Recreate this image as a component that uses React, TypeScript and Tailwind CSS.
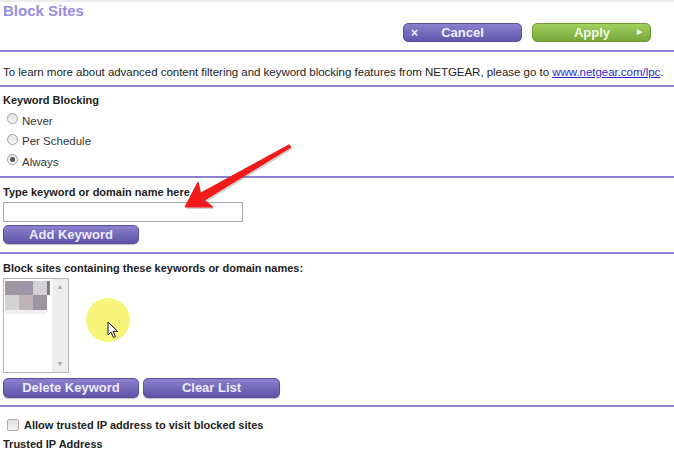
import React from "react"

const purpleBtn =
  "flex items-center justify-center rounded-[5px] border border-[#5a4f9c] bg-gradient-to-b from-[#8c82d0] to-[#5e53a5] text-[13px] font-bold text-[#eeebff] shadow-[0_1px_1px_rgba(0,0,0,0.25)]"

const Rule = () => <div className="h-[2px] w-full bg-[#8b82d2]" />

const Radio = ({ checked }: { checked?: boolean }) => (
  <span className="flex h-[11px] w-[11px] items-center justify-center rounded-full border border-[#a3a3a3] bg-gradient-to-b from-[#e2e2e2] to-[#f8f8f8]">
    {checked && <span className="h-[5px] w-[5px] rounded-full bg-[#555]" />}
  </span>
)

const RadioRow = ({ label, checked }: { label: string; checked?: boolean }) => (
  <div className="flex h-[20.5px] items-center gap-[4px] pl-[7px]">
    <span className="-mt-[3px]">
      <Radio checked={checked} />
    </span>
    <span className="pt-[1px] text-[11.5px] leading-[14px] text-[#333]">{label}</span>
  </div>
)

export default function App() {
  return (
    <div className="relative h-[457px] w-[674px] overflow-hidden bg-white font-['Liberation_Sans',Arial,sans-serif] text-[#222]">
      <div className="h-[50px] border-t-[2px] border-[#ececec]">
        <div className="pl-[3px] text-[15px] font-bold leading-[17px] text-[#978de0]">Block Sites</div>
        <div className="mt-[4px] flex justify-end gap-[10px] pr-[23px]">
          <button className="flex h-[19px] w-[119px] items-center rounded-[5px] border border-[#5a4f9c] bg-gradient-to-b from-[#8b81cf] to-[#6257aa] text-[13px] font-bold text-[#f0eeff]">
            <span className="pl-[7px] text-[12px]">×</span>
            <span className="flex-1 pr-[14px] text-center">Cancel</span>
          </button>
          <button className="flex h-[19px] w-[119px] items-center rounded-[5px] border border-[#6c9c32] bg-gradient-to-b from-[#a2cf60] to-[#76a83a] text-[13px] font-bold text-[#f1f9e6]">
            <span className="flex-1 pl-[14px] text-center">Apply</span>
            <span className="pr-[8px] text-[7px]">▶</span>
          </button>
        </div>
      </div>
      <Rule />
      <div className="h-[33px] pl-[3px] pt-[13px] text-[11.5px] leading-[14px] tracking-[-0.03px] text-[#222]">
        To learn more about advanced content filtering and keyword blocking features from NETGEAR, please go to{" "}
        <a className="text-[#2b2bd0] underline">www.netgear.com/lpc</a>.
      </div>
      <Rule />
      <div className="h-[89px] pt-[6px]">
        <div className="pl-[3px] text-[11px] font-bold leading-[14px] text-[#222]">Keyword Blocking</div>
        <div className="mt-[3px]">
          <RadioRow label="Never" />
          <RadioRow label="Per Schedule" />
          <RadioRow label="Always" checked />
        </div>
      </div>
      <Rule />
      <div className="h-[74px] pl-[3px] pt-[7px]">
        <div className="text-[11px] font-bold leading-[14px]">Type keyword or domain name here</div>
        <div className="mt-[3px] h-[20px] w-[240px] border border-[#a9a9a9] bg-white" />
        <button className={`${purpleBtn} mt-[3px] h-[19px] w-[136px]`}>Add Keyword</button>
      </div>
      <Rule />
      <div className="h-[151px] pl-[3px] pt-[7px]">
        <div className="text-[11px] font-bold leading-[14px]">Block sites containing these keywords or domain names:</div>
        <div className="mt-[3px] flex h-[95px] w-[66px] border border-[#b3b3b3] bg-white">
          <div className="flex-1 pl-[1px] pt-[2px]">
            <div className="flex">
              <div className="h-[14px] w-[14px] bg-[#9c979e]" />
              <div className="h-[14px] w-[14px] bg-[#9b96a8]" />
              <div className="h-[14px] w-[14px] bg-[#d4d2d7]" />
              <div className="h-[14px] w-[3px] bg-[#7c7a7e]" />
            </div>
            <div className="flex">
              <div className="h-[15px] w-[14px] bg-[#d3d3d5]" />
              <div className="h-[15px] w-[14px] bg-[#bdb5b5]" />
              <div className="h-[15px] w-[14px] bg-[#9b96a1]" />
            </div>
            <div className="h-[4px] w-[42px] bg-[#eeeef3]" />
          </div>
          <div className="flex w-[16px] flex-col items-center justify-between bg-[#ededed] py-[4px] text-[7px] leading-[8px] text-[#a5a5a5]">
            <span>▲</span>
            <span>▼</span>
          </div>
        </div>
        <div className="mt-[5px] flex gap-[4px]">
          <button className={`${purpleBtn} h-[20px] w-[136px]`}>Delete Keyword</button>
          <button className={`${purpleBtn} h-[20px] w-[137px]`}>Clear List</button>
        </div>
      </div>
      <Rule />
      <div className="pt-[11px]">
        <div className="flex items-center gap-[5px] pl-[7px]">
          <span className="h-[12px] w-[12px] rounded-[2px] border border-[#ababab] bg-gradient-to-b from-[#e0e0e0] to-[#f4f4f4]" />
          <span className="text-[11px] font-bold leading-[14px] text-[#222]">
            Allow trusted IP address to visit blocked sites
          </span>
        </div>
        <div className="mt-[5px] pl-[3px] text-[11px] font-bold leading-[14px]">Trusted IP Address</div>
      </div>

      {/* yellow click highlight + cursor */}
      <div className="absolute left-[86px] top-[298px] h-[44px] w-[44px] rounded-full bg-[#f7f46e] opacity-90 blur-[0.5px]" />
      <svg className="absolute left-[107px] top-[321px]" width="12" height="18" viewBox="0 0 12 18">
        <path d="M1 1 L1 14 L4 11 L6.5 16.5 L8.5 15.6 L6 10.3 L10.5 10.3 Z" fill="#fff" stroke="#111" strokeWidth="1" strokeLinejoin="round" />
      </svg>

      {/* red annotation arrow */}
      <svg className="pointer-events-none absolute left-0 top-0" width="674" height="457" viewBox="0 0 674 457">
        <polygon
          points="185,207 198,182 200.4,193.2 289.3,144.7 290.8,147.3 204.4,200.2 213,207"
          fill="#7a7a7a"
          opacity="0.35"
          transform="translate(1.5 2)"
        />
        <polygon
          points="185,207 198,182 200.4,193.2 289.3,144.7 290.8,147.3 204.4,200.2 213,207"
          fill="#f01a1a"
          stroke="#f01a1a"
          strokeWidth="1"
          strokeLinejoin="round"
        />
      </svg>
    </div>
  )
}
